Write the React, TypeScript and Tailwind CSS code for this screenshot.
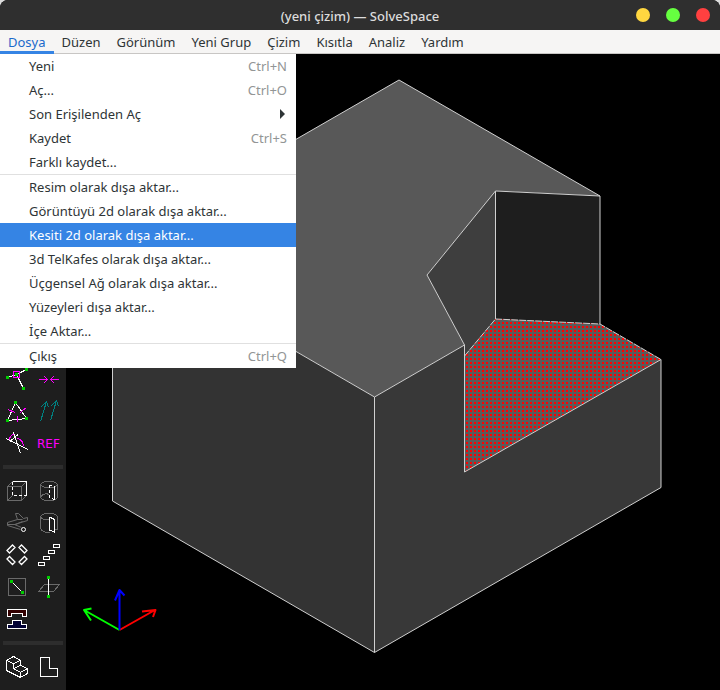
import React, { useState } from "react";

const menus = ["Dosya", "Düzen", "Görünüm", "Yeni Grup", "Çizim", "Kısıtla", "Analiz", "Yardım"];

type Item = { label: string; keys?: string; submenu?: boolean; active?: boolean };

const groups: Item[][] = [
  [
    { label: "Yeni", keys: "Ctrl+N" },
    { label: "Aç...", keys: "Ctrl+O" },
    { label: "Son Erişilenden Aç", submenu: true },
    { label: "Kaydet", keys: "Ctrl+S" },
    { label: "Farklı kaydet..." },
  ],
  [
    { label: "Resim olarak dışa aktar..." },
    { label: "Görüntüyü 2d olarak dışa aktar..." },
    { label: "Kesiti 2d olarak dışa aktar...", active: true },
    { label: "3d TelKafes olarak dışa aktar..." },
    { label: "Üçgensel Ağ olarak dışa aktar..." },
    { label: "Yüzeyleri dışa aktar..." },
    { label: "İçe Aktar..." },
  ],
  [{ label: "Çıkış", keys: "Ctrl+Q" }],
];

const G = "#00cc00";
const M = "#ff00ff";
const D = "#6a6a6a";
const W = "#ffffff";

function Dot({ x, y }: { x: number; y: number }) {
  return <rect x={x} y={y} width="3" height="3" fill={G} />;
}

type Tool = { name: string; art: React.ReactNode };

/* Every tool glyph is drawn on a 24 x 24 grid. */
const constraintTools: Tool[] = [
  {
    name: "Nokta üzerinde",
    art: (
      <>
        <path d="M3.5 10.5 12.5 7.5 22.5 2.5M12.5 7.5 19.5 21.5" stroke={W} />
        <path d="M9.5 4.5h6v6h-6z" stroke={M} />
        <Dot x={2} y={9} />
        <Dot x={11} y={6} />
        <Dot x={21} y={1} />
        <Dot x={18} y={20} />
      </>
    ),
  },
  {
    name: "Simetrik",
    art: <path d="M3 12.5h8M8 9l3.5 3.5-3.5 3.5M23 12.5h-8M18 9l-3.5 3.5 3.5 3.5" stroke={M} />,
  },
  {
    name: "Eşit",
    art: (
      <>
        <path d="M11.5 3.5 3.5 21.5 22.5 19.5Z" stroke={W} />
        <path d="M4 10.5l7 3M16.5 13.5l5-4.5M13.5 16.5v6" stroke={M} />
        <Dot x={10} y={2} />
        <Dot x={2} y={20} />
        <Dot x={21} y={18} />
      </>
    ),
  },
  {
    name: "Paralel",
    art: <path d="M4.5 22.5 10.5 2.5M5 8l5.5-5.5 2 6M14.5 21.5 20.5 1.5M15 7l5.5-5.5 2 6" stroke="#008080" />,
  },
  {
    name: "Dik",
    art: (
      <>
        <path d="M2 7.5 24 18.5M9.5 1.5 16.5 22.5M6 10.5 14 3.5" stroke={W} />
        <path d="M5.5 9q0-5 5-5.5M12.5 7.5q6 0 7 7.5" stroke={M} />
      </>
    ),
  },
  {
    name: "Referans",
    art: (
      <text x="1" y="17" fill={M} className="font-['DejaVu_Sans',sans-serif] text-[12px]">
        REF
      </text>
    ),
  },
];

const groupTools: Tool[] = [
  {
    name: "Uzat",
    art: (
      <>
        <path d="M3.5 7.5h14v14h-14zM3.5 7.5l5-5M17.5 21.5l5-5M3.5 21.5l5-5M17.5 7.5l5-5" stroke={D} />
        <path d="M8.5 2.5h14v14" stroke={W} />
        <path d="M8.5 2.5v14h14" stroke={W} strokeDasharray="3 2" />
      </>
    ),
  },
  {
    name: "Döndür",
    art: (
      <>
        <path d="M4.5 5.5v13c1 4 16 4 17 0v-13M4.5 5.5c1-4 16-4 17 0M4.5 5.5c1 4 16 4 17 0M4.5 18.5c2-4 6-4 9-3" stroke={D} />
        <path d="M13.5 6v12l5 3M13.5 6l5 2" stroke={W} strokeDasharray="3 2" />
        <path d="M18.5 8v13" stroke={W} />
      </>
    ),
  },
  {
    name: "Sarmal",
    art: (
      <>
        <path
          d="M11.5 2.5h3l5 5 4-1v3l-13 4 7 3M11.5 2.5l2 6-10 3v3l13 4M3.5 13.5h8l7-3M13.5 8.5h5"
          stroke={D}
          shapeRendering="auto"
        />
        <circle cx="19.5" cy="18.5" r="2" stroke={W} fill="#1e1e1e" shapeRendering="auto" />
      </>
    ),
  },
  {
    name: "Çevir",
    art: (
      <>
        <path d="M4.5 5.5v12c1 3 5 4 9 4M4.5 5.5c1-4 16-4 17 0v13h-3M4.5 5.5c1 3 4 3 9 3" stroke={D} />
        <path d="M13.5 6v13M13.5 6l5 2.5v12.5l-5-2" stroke={W} />
      </>
    ),
  },
  {
    name: "Döndürerek çoğalt",
    art: (
      <path
        d="M3 7.500l5.500-5.500 2.500 2.500-5.500 5.500zM15 4.500l2.500-2.500 5.500 5.500-2.500 2.500zM3 16l2.500-2.500 5.500 5.500-2.500 2.500zM15 19l5.500-5.500 2.500 2.500-5.500 5.500z"
        stroke={W}
        strokeWidth="1.3"
        shapeRendering="auto"
      />
    ),
  },
  {
    name: "Öteleyerek çoğalt",
    art: <path d="M2.5 19.5h6v3h-6zM7.5 13.5h6v3h-6zM12.5 7.5h6v3h-6zM17.5 1.5h6v3h-6z" stroke={W} />,
  },
  {
    name: "Çalışma düzleminde çiz",
    art: (
      <>
        <path d="M4.5 3.5h17v17h-17z" stroke={D} />
        <path d="M7.5 6.5 18.5 17.5" stroke={W} />
        <Dot x={6} y={5} />
        <Dot x={17} y={16} />
      </>
    ),
  },
  {
    name: "3B çiz",
    art: (
      <>
        <path d="M2.5 16.5 8.5 9.5h15l-6 7z" stroke={D} />
        <path d="M12.5 3v18" stroke={W} />
        <Dot x={11} y={1} />
        <Dot x={11} y={20} />
      </>
    ),
  },
  {
    name: "Birleştir",
    art: (
      <>
        <path d="M3.5 2.5h19v7h-4v-3h-11v3h-4z" stroke={W} fill="#330000" />
        <path d="M8.5 13.5h9v4h5v4h-19v-4h5z" stroke={W} fill="#000033" />
      </>
    ),
  },
];

const viewTools: Tool[] = [
  {
    name: "İzometrik",
    art: (
      <path
        d="M9.5 1.5 2.5 5.5v10l14 7 7-4v-5l-7-3v-5zM2.5 5.5l7 3 7-3M9.5 8.5v5l7 4 7-4M9.5 13.5l7-3M16.5 17.5v5"
        stroke={W}
      />
    ),
  },
  { name: "En yakın", art: <path d="M4.5 2.5h9v11h8v8h-17z" stroke={W} /> },
];

function ToolGrid({ tools }: { tools: Tool[] }) {
  return (
    <div className="grid w-16 grid-cols-2">
      {tools.map((t) => (
        <button key={t.name} type="button" aria-label={t.name} className="flex h-8 items-center justify-center">
          <svg viewBox="0 0 24 24" className="size-6 overflow-visible" fill="none" shapeRendering="crispEdges">
            {t.art}
          </svg>
        </button>
      ))}
    </div>
  );
}

function Rule() {
  return (
    <div className="flex h-4 items-center px-[3px]">
      <div className="h-1 w-full bg-[#2d2d2d]" />
    </div>
  );
}

function Model() {
  return (
    <svg viewBox="66 54 654 636" className="h-[636px] w-[654px] shrink-0" fill="none" strokeLinejoin="round">
      <defs>
        <pattern id="dots" width="4" height="4" patternUnits="userSpaceOnUse">
          <rect width="4" height="4" fill="#5a5a5a" />
          <rect x="2" y="2" width="2" height="2" fill="#ff0000" shapeRendering="crispEdges" />
        </pattern>
      </defs>
      <path d="M399 80 600 196 496 191 427 275 464.5 345 374.5 397 112.5 245Z" fill="#585858" />
      <path d="M112.5 245 374.5 397V652.5L112.5 501Z" fill="#333333" />
      <path d="M374.5 397 464.5 345V472L661 359.5V487.5L374.5 652.5Z" fill="#383838" />
      <path d="M427 275 495.5 191V319L464.5 356V345Z" fill="#3e3e3e" />
      <path d="M495.5 191 600 196V324L495.5 319Z" fill="#1e1e1e" />
      <path d="M495.5 319 600 324 661 359.5 464.5 472V356Z" fill="url(#dots)" />
      <g stroke="#d0d0d0">
        <path d="M112.5 245 399 80 600 196 495.5 191 427 275 464.5 345 374.5 397Z" />
        <path d="M112.5 245V501L374.5 652.5 661 487.5V359.5L464.5 472V345M374.5 397V652.5" />
        <path d="M495.5 191V319M600 196V324" />
        <path d="M464.5 356 495.5 319 600 324 661 359.5" strokeDasharray="7 1" />
      </g>
      <g strokeWidth="2">
        <path d="M119.5 630 155 610M142 611.5 155.5 610 153 617" stroke="#ff0000" />
        <path d="M119.5 630 84 610M91 620.5 84 610 91.5 608.5" stroke="#00ff00" />
        <path d="M119.5 630V590M115 600.5 119.5 590 124.5 595.5" stroke="#0000ff" />
      </g>
    </svg>
  );
}

function FileMenu() {
  return (
    <div role="menu" className="absolute top-6 left-0 z-10 w-[296px] bg-white text-[#2e3436]">
      {groups.map((group, i) => (
        <div key={i} role="group" className={i > 0 ? "border-t border-[#e0e0e0]" : ""}>
          {group.map((item) => (
            <button
              key={item.label}
              type="button"
              role="menuitem"
              className={`flex h-6 w-full items-center justify-between pr-[9px] pl-[29px] ${
                item.active ? "bg-[#3584e4] text-white" : ""
              }`}
            >
              <span>{item.label}</span>
              {item.keys && <span className="text-[#929595]">{item.keys}</span>}
              {item.submenu && (
                <svg viewBox="0 0 6 10" className="mr-px h-2.5 w-1.5">
                  <path d="M0 0 5 5 0 10Z" fill="#2e3436" />
                </svg>
              )}
            </button>
          ))}
        </div>
      ))}
    </div>
  );
}

export default function App() {
  const [open, setOpen] = useState("Dosya");
  return (
    <div className="bg-[#dcdcdc]">
      <div className="flex min-h-screen flex-col overflow-hidden rounded-t-lg bg-black font-['Noto_Sans','Open_Sans',sans-serif] text-[13px] leading-5">
        <header className="grid h-[30px] grid-cols-[1fr_auto_1fr] items-center bg-[#2f2f2f] px-2.5">
          <span />
          <h1 className="pt-0.5 font-medium text-[#dcdcdc]">(yeni çizim) — SolveSpace</h1>
          <div className="flex justify-end gap-4">
            <button type="button" aria-label="Küçült" className="size-3.5 rounded-full bg-[#ffd740]" />
            <button type="button" aria-label="Büyüt" className="size-3.5 rounded-full bg-[#66ff40]" />
            <button type="button" aria-label="Kapat" className="size-3.5 rounded-full bg-[#ff4040]" />
          </div>
        </header>
        <nav className="relative flex h-6 border-b border-[#c8c6c4] bg-[#f6f5f4] text-[#2e3436]">
          {menus.map((name) => (
            <button
              key={name}
              type="button"
              onClick={() => setOpen(open === name ? "" : name)}
              className={`-mb-px px-2 pb-px whitespace-nowrap ${
                open === name ? "text-[#1b6acb] shadow-[inset_0_-3px_0_#3584e4]" : ""
              }`}
            >
              {name}
            </button>
          ))}
          {open === "Dosya" && <FileMenu />}
        </nav>
        <main className="flex grow">
          <aside className="w-[66px] shrink-0 bg-[#1e1e1e] pt-[309px]">
            <ToolGrid tools={constraintTools} />
            <Rule />
            <ToolGrid tools={groupTools} />
            <Rule />
            <ToolGrid tools={viewTools} />
          </aside>
          <section aria-label="Çizim" className="min-w-0 grow overflow-hidden">
            <Model />
          </section>
        </main>
      </div>
    </div>
  );
}
